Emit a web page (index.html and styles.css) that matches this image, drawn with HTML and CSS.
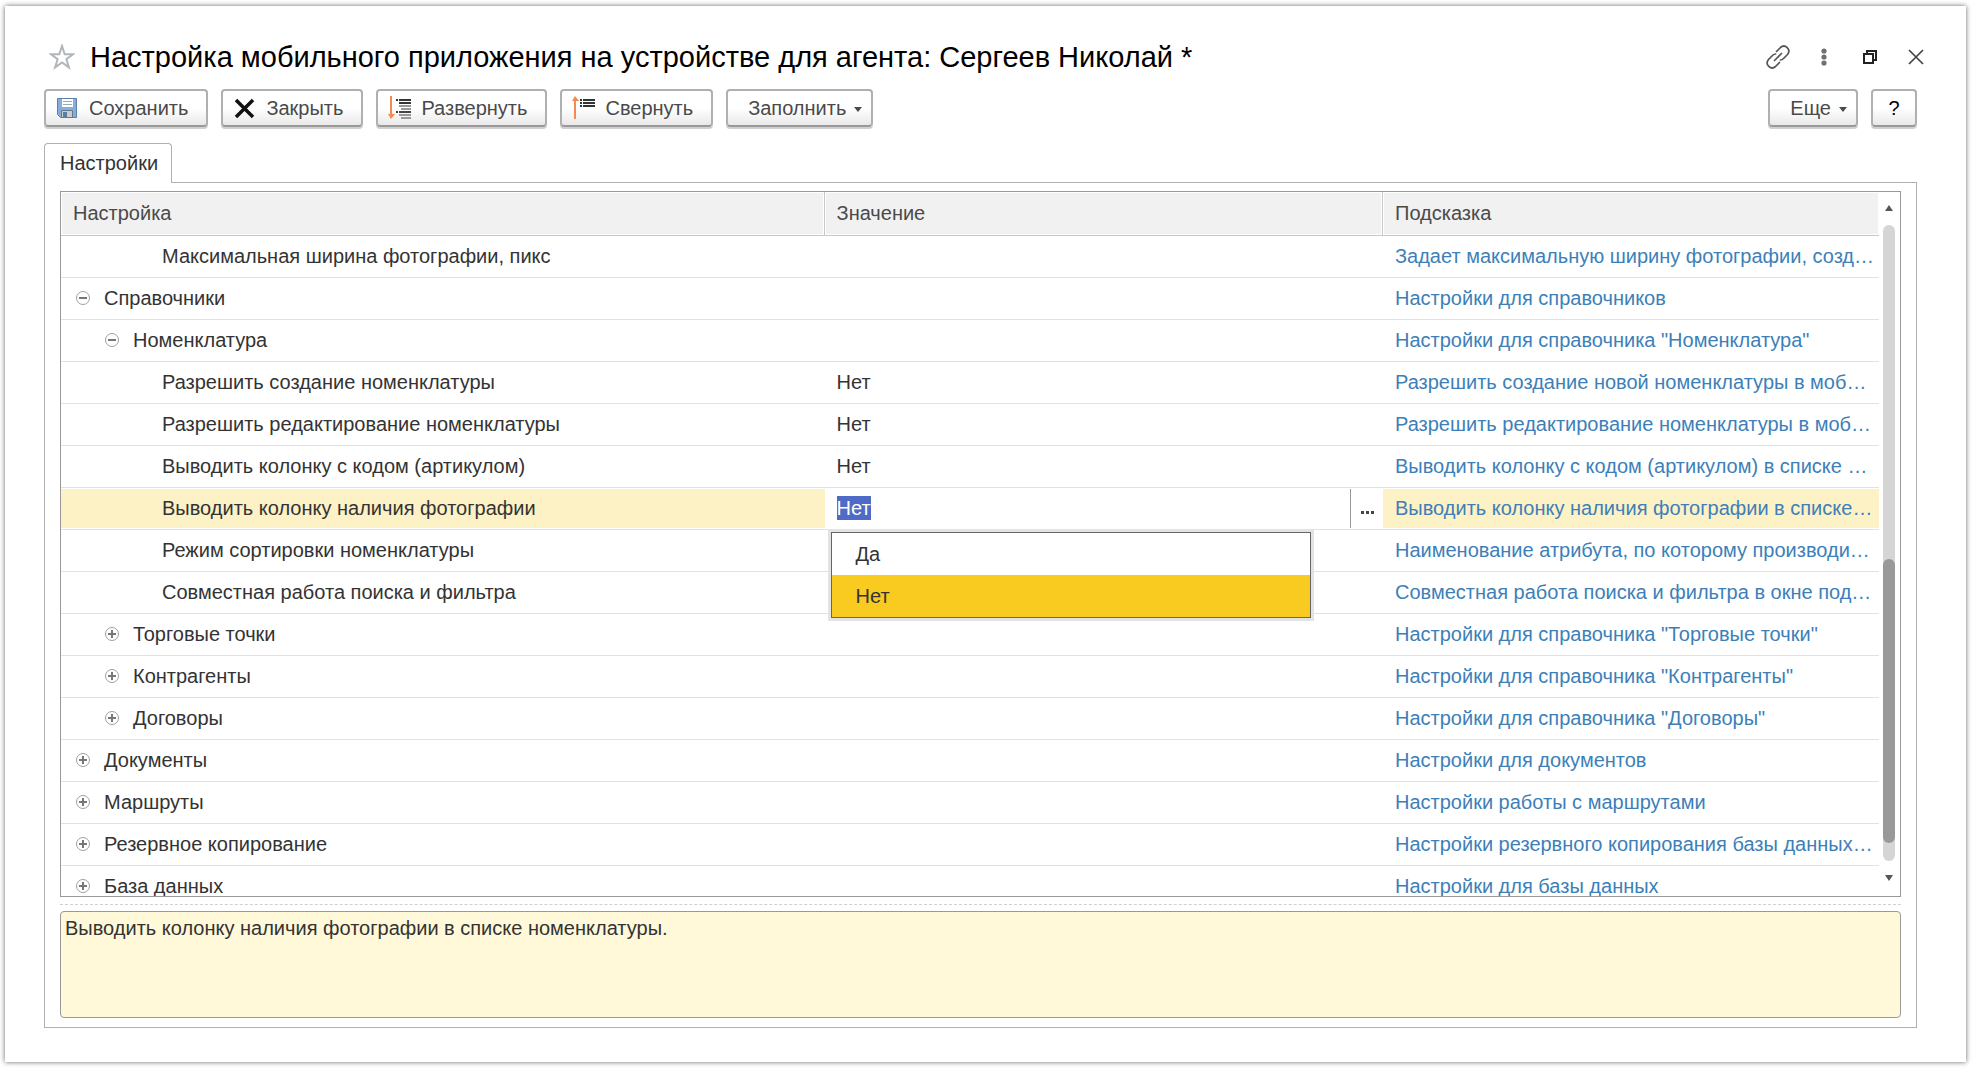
FILE: index.html
```html
<!DOCTYPE html>
<html lang="ru">

<head>
    <meta charset="UTF-8">
    <meta name="viewport" content="width=device-width, initial-scale=1.0">
    <title>Настройка мобильного приложения</title>
    <link rel="stylesheet" href="styles.css">
</head>

<body>
    <main class="window">
        <header class="title-bar">
            <button class="icon-btn" aria-label="Избранное">
                <svg width="26" height="26" viewBox="0 0 26 26"><path d="M13 2l2.700 8.200h8.300l-6.600 5 2.500 8.200L13 18.400l-6.900 5 2.500-8.200L2 10.200h8.300z" fill="none" stroke="#b0b6bc" stroke-width="2"/></svg>
            </button>
            <h1>Настройка мобильного приложения на устройстве для агента: Сергеев Николай *</h1>
            <div class="window-tools">
                <button class="icon-btn" aria-label="Получить ссылку">
                    <svg width="26" height="26" viewBox="0 0 26 26" fill="none" stroke="#555" stroke-width="1.700" stroke-linecap="round"><path d="M9.500 16.500l7-7M11.500 7.500l4-4c4.500-4 11 2 7 7l-4 4c-1 1-2 1.500-3 1.500M14.500 18.500l-4 4c-4.500 4-11-2-7-7l4-4c1-1 2-1.500 3-1.500"/></svg>
                </button>
                <button class="icon-btn" aria-label="Меню">
                    <svg width="26" height="26" viewBox="0 0 26 26" fill="#707070"><circle cx="13" cy="7" r="2.600"/><circle cx="13" cy="13" r="2.600"/><circle cx="13" cy="19" r="2.600"/></svg>
                </button>
                <button class="icon-btn" aria-label="Развернуть окно">
                    <svg width="26" height="26" viewBox="0 0 26 26" fill="none" stroke="#222" stroke-width="2"><path d="M7 10h9v9H7zM10 10V7h9v9h-3"/></svg>
                </button>
                <button class="icon-btn" aria-label="Закрыть окно">
                    <svg width="26" height="26" viewBox="0 0 26 26" stroke="#444" stroke-width="1.700"><path d="M6 6l14 14M20 6L6 20"/></svg>
                </button>
            </div>
        </header>

        <div class="toolbar">
            <button class="btn">
                <svg width="24" height="24" viewBox="0 0 24 24">
                    <path d="M1.500 2.500h19v19h-16l-3-3z" fill="#86aedd" stroke="#5c80aa"/>
                    <path d="M6 3h11v8H6z" fill="#fff"/>
                    <path d="M7 5.500h9M7 8.500h9" stroke="#9aa9ba"/>
                    <path d="M5.500 14.500h11v7h-11z" fill="#c6cfcd" stroke="#66788a"/>
                    <path d="M7 16h4v5H7z" fill="#5c7ea6"/>
                </svg>
                Сохранить
            </button>
            <button class="btn">
                <svg width="24" height="24" viewBox="0 0 24 24" stroke="#111" stroke-width="3.500"><path d="M3 4l17 17M20 4L3 21"/></svg>
                Закрыть
            </button>
            <button class="btn">
                <svg width="24" height="24" viewBox="0 0 24 24">
                    <path d="M2 0h2v18h3l-4 5-3-5h2z" fill="#f28a52"/>
                    <path d="M8 4h2M11 4h12M11 7h12" stroke="#333" stroke-width="2"/>
                    <path d="M11 10h12M13 13h10M11 19h12M13 22h10" stroke="#999" stroke-width="2"/>
                    <path d="M8 16h2M11 16h12" stroke="#444" stroke-width="2"/>
                </svg>
                Развернуть
            </button>
            <button class="btn">
                <svg width="24" height="24" viewBox="0 0 24 24">
                    <path d="M2 23h2V5h3L3 0 0 5h2z" fill="#f28a52"/>
                    <path d="M8 4h2M11 4h12M8 7h2M11 7h12M8 10h2M11 10h12" stroke="#333" stroke-width="2"/>
                </svg>
                Свернуть
            </button>
            <button class="btn btn-menu">Заполнить<span class="arrow"></span></button>
            <button class="btn btn-menu btn-more">Еще<span class="arrow"></span></button>
            <button class="btn btn-help">?</button>
        </div>

        <nav class="tabs">
            <button class="tab">Настройки</button>
        </nav>

        <section class="panel">
            <div class="grid">
                <div class="grid-body">
                    <table>
                        <thead>
                            <tr>
                                <th class="col-name">Настройка</th>
                                <th>Значение</th>
                                <th class="col-hint">Подсказка</th>
                            </tr>
                        </thead>
                        <tbody>
                            <tr>
                                <td class="level-2">Максимальная ширина фотографии, пикс</td>
                                <td></td>
                                <td class="hint">Задает максимальную ширину фотографии, созд…</td>
                            </tr>
                            <tr>
                                <td class="level-0"><button class="toggle open" aria-label="Свернуть группу"></button>Справочники</td>
                                <td></td>
                                <td class="hint">Настройки для справочников</td>
                            </tr>
                            <tr>
                                <td class="level-1"><button class="toggle open" aria-label="Свернуть группу"></button>Номенклатура</td>
                                <td></td>
                                <td class="hint">Настройки для справочника "Номенклатура"</td>
                            </tr>
                            <tr>
                                <td class="level-2">Разрешить создание номенклатуры</td>
                                <td>Нет</td>
                                <td class="hint">Разрешить создание новой номенклатуры в моб…</td>
                            </tr>
                            <tr>
                                <td class="level-2">Разрешить редактирование номенклатуры</td>
                                <td>Нет</td>
                                <td class="hint">Разрешить редактирование номенклатуры в моб…</td>
                            </tr>
                            <tr>
                                <td class="level-2">Выводить колонку с кодом (артикулом)</td>
                                <td>Нет</td>
                                <td class="hint">Выводить колонку с кодом (артикулом) в списке …</td>
                            </tr>
                            <tr class="current">
                                <td class="level-2">Выводить колонку наличия фотографии</td>
                                <td class="editing">
                                    <div class="editor">
                                        <input type="text" class="editor-input" value="Нет" aria-label="Значение">
                                        <button class="editor-btn" aria-label="Выбрать"><i></i><i></i><i></i></button>
                                        <ul class="dropdown" role="listbox">
                                            <li role="option">Да</li>
                                            <li role="option" class="active" aria-selected="true">Нет</li>
                                        </ul>
                                    </div>
                                </td>
                                <td class="hint">Выводить колонку наличия фотографии в списке…</td>
                            </tr>
                            <tr>
                                <td class="level-2">Режим сортировки номенклатуры</td>
                                <td></td>
                                <td class="hint">Наименование атрибута, по которому производи…</td>
                            </tr>
                            <tr>
                                <td class="level-2">Совместная работа поиска и фильтра</td>
                                <td></td>
                                <td class="hint">Совместная работа поиска и фильтра в окне под…</td>
                            </tr>
                            <tr>
                                <td class="level-1"><button class="toggle" aria-label="Развернуть группу"></button>Торговые точки</td>
                                <td></td>
                                <td class="hint">Настройки для справочника "Торговые точки"</td>
                            </tr>
                            <tr>
                                <td class="level-1"><button class="toggle" aria-label="Развернуть группу"></button>Контрагенты</td>
                                <td></td>
                                <td class="hint">Настройки для справочника "Контрагенты"</td>
                            </tr>
                            <tr>
                                <td class="level-1"><button class="toggle" aria-label="Развернуть группу"></button>Договоры</td>
                                <td></td>
                                <td class="hint">Настройки для справочника "Договоры"</td>
                            </tr>
                            <tr>
                                <td class="level-0"><button class="toggle" aria-label="Развернуть группу"></button>Документы</td>
                                <td></td>
                                <td class="hint">Настройки для документов</td>
                            </tr>
                            <tr>
                                <td class="level-0"><button class="toggle" aria-label="Развернуть группу"></button>Маршруты</td>
                                <td></td>
                                <td class="hint">Настройки работы с маршрутами</td>
                            </tr>
                            <tr>
                                <td class="level-0"><button class="toggle" aria-label="Развернуть группу"></button>Резервное копирование</td>
                                <td></td>
                                <td class="hint">Настройки резервного копирования базы данных…</td>
                            </tr>
                            <tr>
                                <td class="level-0"><button class="toggle" aria-label="Развернуть группу"></button>База данных</td>
                                <td></td>
                                <td class="hint">Настройки для базы данных</td>
                            </tr>
                        </tbody>
                    </table>
                </div>
                <div class="scrollbar">
                    <span class="scroll-up"></span>
                    <div class="track"><div class="thumb"></div></div>
                    <span class="scroll-down"></span>
                </div>
            </div>
            <div class="splitter"></div>
            <textarea class="description" aria-label="Описание" readonly>Выводить колонку наличия фотографии в списке номенклатуры.</textarea>
        </section>
    </main>
    <script>
        // при открытии редактора значение выделено целиком
        const input = document.querySelector('.editor-input')
        input.focus()
        input.select()
    </script>
</body>

</html>
```

FILE: styles.css
```css
* {
    box-sizing: border-box;
    margin: 0;
    padding: 0;
}

body {
    font: 20px/24px "Liberation Sans", Arial, sans-serif;
    color: #333;
    background: #fff;
}

button,
input,
textarea {
    font: inherit;
    color: inherit;
    border: none;
    background: none;
    outline: none;
}

.window {
    display: flex;
    flex-direction: column;
    height: calc(100vh - 12px);
    margin: 6px 6px 6px 5px;
    padding: 32px 49px 34px 39px;
    background: #fff;
    box-shadow: 0 0 5px rgba(0, 0, 0, .6);
    overflow: hidden;
}

/* заголовок */
.title-bar {
    display: flex;
    align-items: center;
    height: 38px;
    margin-right: -12px;
    padding-left: 5px;
}

.title-bar h1 {
    flex: 1;
    margin-left: 15px;
    font-size: 29px;
    line-height: 38px;
    font-weight: normal;
    color: #000;
    white-space: nowrap;
}

.window-tools {
    display: flex;
    gap: 20px;
}

.icon-btn {
    width: 26px;
    height: 26px;
}

.icon-btn svg {
    display: block;
}

/* командная панель */
.toolbar {
    display: flex;
    gap: 13px;
    margin-top: 13px;
}

.btn {
    display: flex;
    align-items: center;
    height: 38px;
    padding: 0 18px 0 10px;
    border: 2px solid #b0b0b0;
    border-bottom-color: #999;
    border-radius: 4px;
    background: linear-gradient(#fff 50%, #e9e9e9);
    box-shadow: 0 2px #d0d0d0;
    color: #4a4a4a;
    white-space: nowrap;
}

.btn svg {
    margin-right: 9px;
}

.btn-menu {
    padding: 0 9px 0 20px;
}

.arrow {
    margin: 2px 0 0 8px;
    border: 4px solid transparent;
    border-top: 5px solid #4a4a4a;
    border-bottom: none;
}

.btn-more {
    margin-left: auto;
}

.btn-help {
    justify-content: center;
    width: 46px;
    padding: 0;
    color: #000;
}

/* вкладки */
.tabs {
    display: flex;
    margin: 16px 0 -1px;
}

.tab {
    height: 40px;
    padding: 0 13px 2px 15px;
    border: 1px solid #b0b0b0;
    border-bottom: none;
    border-radius: 4px 4px 0 0;
    background: #fff;
    z-index: 1;
}

.panel {
    flex: 1;
    display: flex;
    flex-direction: column;
    min-height: 0;
    padding: 8px 15px 9px;
    border: 1px solid #b0b0b0;
}

/* таблица настроек */
.grid {
    flex: 1;
    display: flex;
    min-height: 0;
    border: 1px solid #999;
}

.grid-body {
    flex: 1;
    min-width: 0;
    overflow: hidden;
}

table {
    width: 100%;
    table-layout: fixed;
    border-collapse: separate;
    border-spacing: 0;
}

.col-name {
    width: 42%;
}

th,
td {
    height: 42px;
    padding: 0 2px 1px 12px;
    border-bottom: 1px solid #e2e2e2;
    text-align: left;
    white-space: nowrap;
    overflow: hidden;
    text-overflow: ellipsis;
}

th {
    height: 44px;
    padding-bottom: 2px;
    border-right: 1px solid #c8c8c8;
    border-bottom-color: #c8c8c8;
    background: #f1f1f1;
    box-shadow: inset 0 0 0 1px #fff;
    font-weight: normal;
    color: #4a4a4a;
}

.col-hint {
    width: 496px;
    border-right: none;
}

.hint {
    color: #3d7fb8;
}

.level-0 {
    padding-left: 15px;
}

.level-1 {
    padding-left: 44px;
}

.level-2 {
    padding-left: 101px;
}

.toggle {
    width: 14px;
    height: 14px;
    margin-right: 14px;
    border: 1px solid #a0a0a0;
    border-radius: 50%;
    background: linear-gradient(#777, #777) center / 8px 2px no-repeat, linear-gradient(#777, #777) center / 2px 8px no-repeat;
    vertical-align: 1px;
}

.toggle.open {
    background: linear-gradient(#777, #777) center / 8px 2px no-repeat;
}

.current td {
    background: #fdf1c6;
    box-shadow: inset 0 1px #fff, inset 0 -1px #fff;
}

.current .editing {
    padding: 0;
    background: #fff;
    overflow: visible;
}

.editor {
    position: relative;
    display: flex;
    height: 39px;
}

.editor-input {
    flex: 1;
    min-width: 0;
    padding: 0 12px 1px;
}

.editor-input::selection {
    background: #4f6bc5;
    color: #fff;
}

.editor-btn {
    display: flex;
    justify-content: center;
    align-items: center;
    gap: 2px;
    width: 33px;
    padding-top: 8px;
    border-left: 1px solid #999;
}

.editor-btn i {
    width: 3px;
    height: 3px;
    background: #444;
}

.dropdown {
    position: absolute;
    top: 43px;
    left: 6px;
    right: 72px;
    z-index: 2;
    border: 1px solid #666;
    background: #fff;
    box-shadow: 0 0 0 3px #e3e3e3;
    list-style: none;
}

.dropdown li {
    padding: 0 24px;
    line-height: 42px;
}

.dropdown .active {
    background: #f9cb20;
}

/* полоса прокрутки */
.scrollbar {
    display: flex;
    flex-direction: column;
    align-items: center;
    width: 21px;
    padding: 13px 2px 15px 0;
}

.scroll-up,
.scroll-down {
    border: 4px solid transparent;
}

.scroll-up {
    border-top: none;
    border-bottom: 6px solid #555;
}

.scroll-down {
    border-bottom: none;
    border-top: 6px solid #555;
}

.track {
    flex: 1;
    display: flex;
    align-items: flex-end;
    width: 12px;
    margin: 14px 0;
    padding-bottom: 18px;
    border-radius: 6px;
    background: #d5d5d5;
}

.thumb {
    width: 12px;
    height: 46%;
    border-radius: 6px;
    background: #999;
}

.splitter {
    margin: 7px 0 6px;
    border-top: 1px dashed #d0d0d0;
}

.description {
    height: 107px;
    padding: 4px;
    border: 1px solid #999;
    border-radius: 4px;
    background: #fff9d9;
    resize: none;
}
```
